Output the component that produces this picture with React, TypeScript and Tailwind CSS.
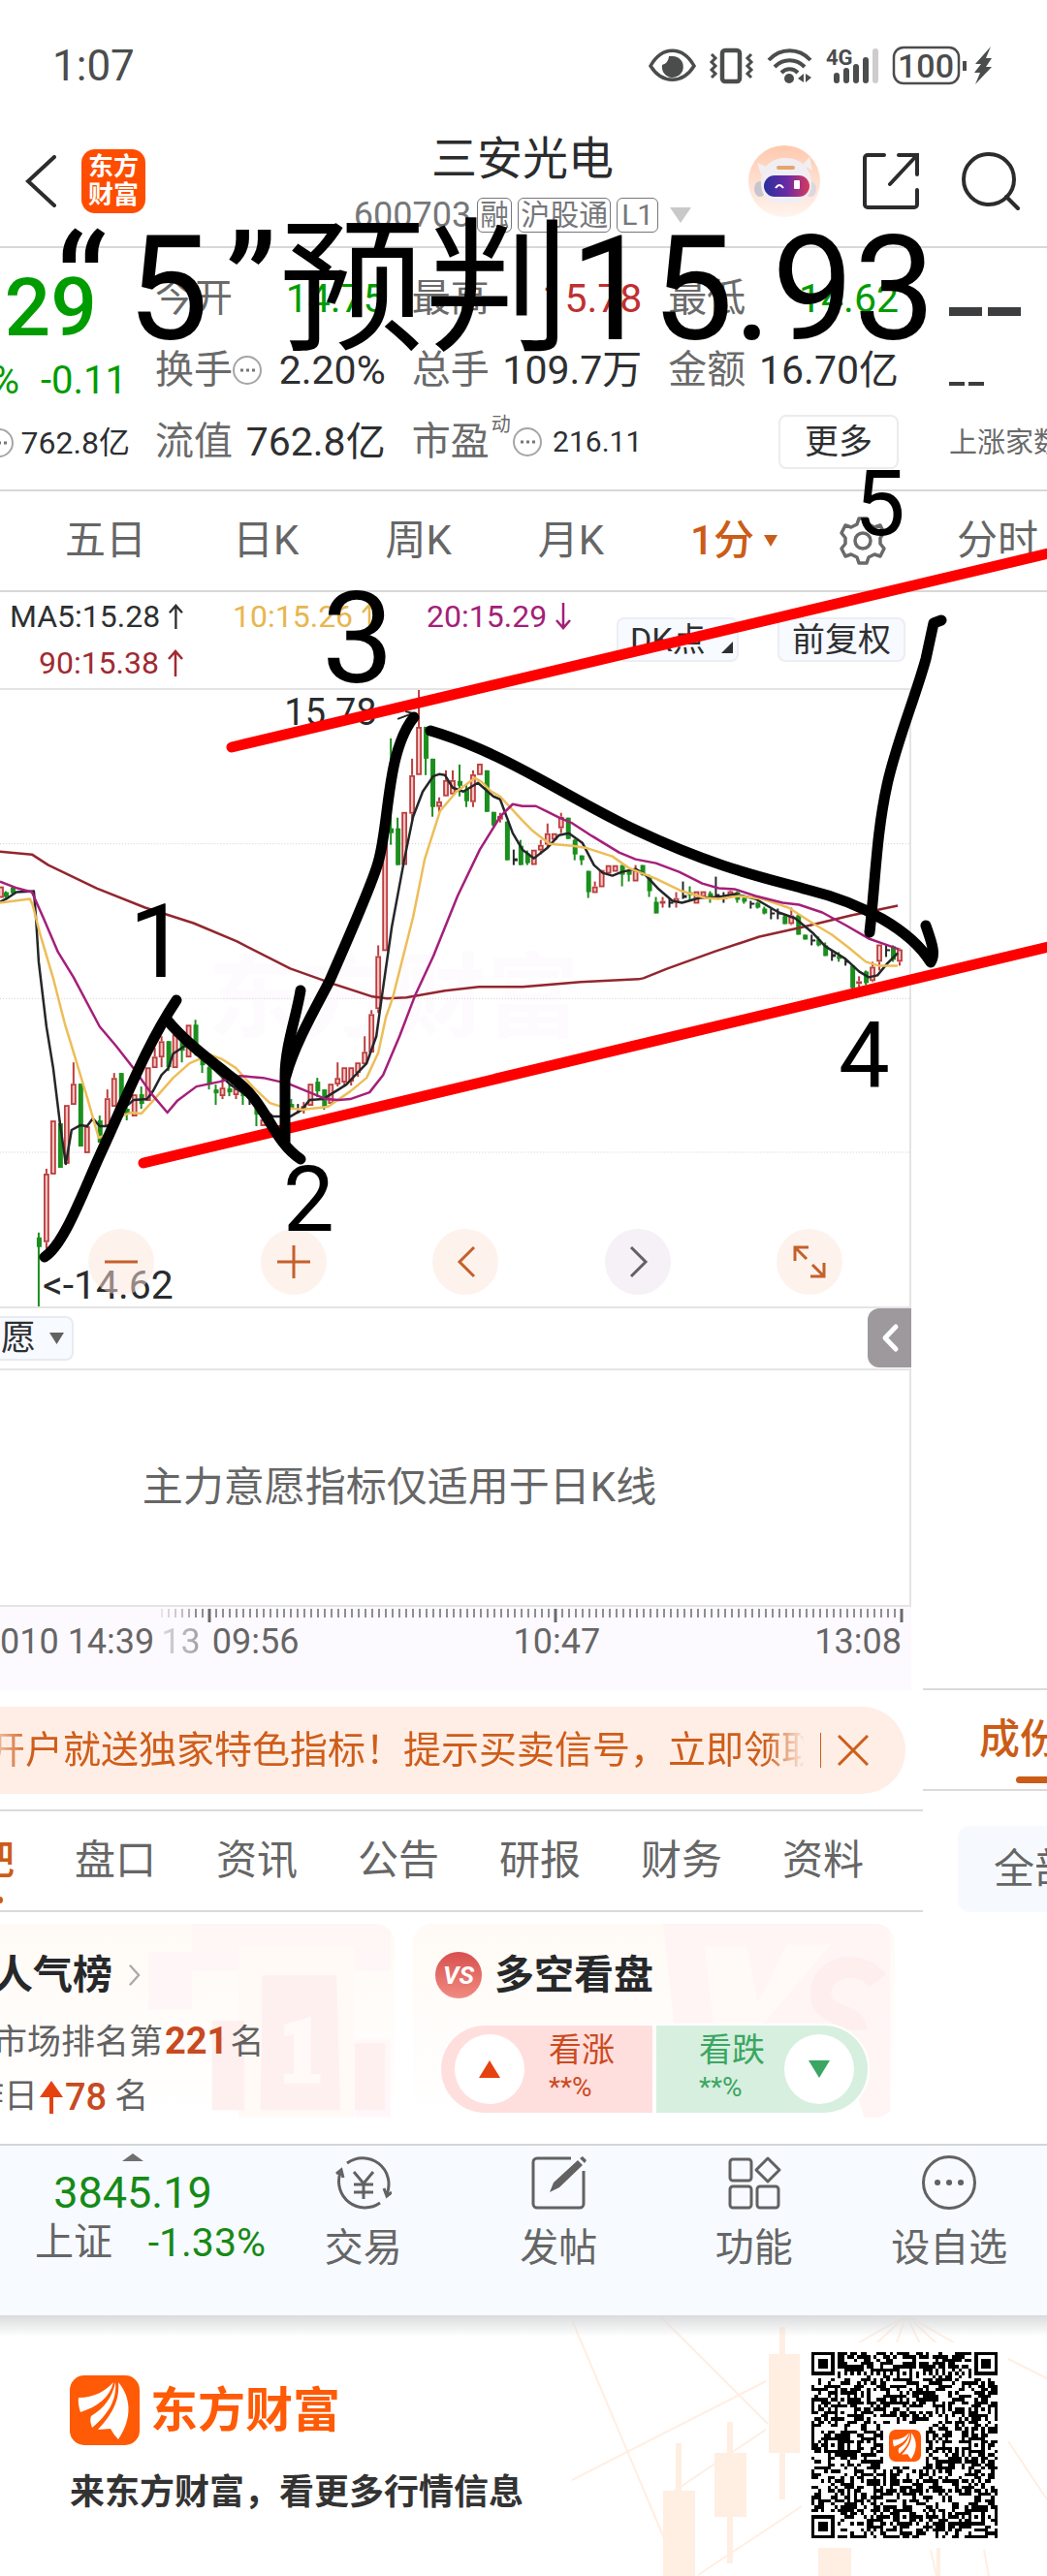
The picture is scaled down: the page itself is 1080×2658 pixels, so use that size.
import React from "react";

type Candle = [x: number, high: number, low: number, top: number, bottom: number, tone: "r" | "g" | "b"];

const CANDLES: Candle[] = [
  [1, 915, 927, 915, 927, "r"], [6, 920, 927, 921, 926, "g"], [13, 915, 923, 916, 922, "g"],
  [40, 1273, 1350, 1278, 1288, "g"], [48, 1207, 1290, 1212, 1283, "r"], [55, 1157, 1213, 1157, 1213, "r"],
  [62, 1157, 1206, 1160, 1206, "g"], [69, 1141, 1202, 1141, 1202, "r"], [76, 1097, 1141, 1119, 1141, "r"],
  [83, 1119, 1184, 1119, 1184, "g"], [90, 1163, 1191, 1163, 1191, "r"], [103, 1152, 1180, 1157, 1180, "g"],
  [111, 1125, 1163, 1134, 1163, "r"], [118, 1108, 1143, 1113, 1143, "r"], [125, 1108, 1145, 1108, 1145, "g"],
  [131, 1140, 1157, 1145, 1150, "g"], [139, 1130, 1153, 1130, 1153, "r"], [146, 1122, 1145, 1130, 1140, "g"],
  [153, 1102, 1137, 1102, 1137, "r"], [160, 1082, 1103, 1091, 1103, "r"], [167, 1070, 1102, 1075, 1092, "r"],
  [174, 1075, 1106, 1075, 1102, "g"], [181, 1068, 1103, 1068, 1103, "r"], [188, 1068, 1097, 1070, 1085, "g"],
  [195, 1058, 1092, 1058, 1092, "r"], [202, 1053, 1090, 1058, 1087, "g"], [209, 1087, 1108, 1090, 1100, "g"],
  [216, 1100, 1125, 1102, 1120, "g"], [223, 1120, 1141, 1125, 1129, "g"], [230, 1113, 1135, 1123, 1132, "r"],
  [237, 1120, 1132, 1124, 1128, "g"], [244, 1118, 1135, 1124, 1131, "r"], [251, 1123, 1141, 1127, 1132, "g"],
  [258, 1135, 1141, 1137, 1139, "b"], [265, 1139, 1163, 1143, 1151, "g"], [272, 1156, 1163, 1156, 1163, "r"],
  [301, 1135, 1146, 1140, 1144, "g"], [308, 1140, 1150, 1145, 1147, "b"], [314, 1138, 1150, 1142, 1145, "r"],
  [321, 1119, 1142, 1119, 1142, "r"], [328, 1113, 1133, 1117, 1127, "g"], [335, 1125, 1146, 1125, 1143, "g"],
  [342, 1119, 1140, 1119, 1140, "r"], [349, 1097, 1122, 1113, 1120, "r"], [356, 1102, 1122, 1102, 1118, "r"],
  [363, 1102, 1121, 1102, 1117, "r"], [370, 1097, 1112, 1097, 1108, "r"], [377, 1070, 1099, 1086, 1099, "r"],
  [384, 1043, 1087, 1047, 1087, "r"], [391, 976, 1046, 987, 1042, "r"], [398, 850, 982, 850, 982, "r"],
  [404, 762, 872, 855, 860, "g"], [411, 844, 893, 855, 893, "g"], [418, 838, 893, 838, 893, "r"],
  [426, 783, 848, 800, 840, "r"], [433, 712, 800, 750, 800, "r"], [440, 750, 800, 750, 783, "g"],
  [447, 783, 843, 783, 833, "g"], [454, 823, 838, 827, 833, "r"], [461, 795, 822, 805, 822, "r"],
  [468, 795, 820, 805, 820, "r"], [475, 789, 822, 806, 811, "g"], [482, 810, 833, 815, 827, "g"],
  [489, 795, 833, 799, 828, "r"], [496, 788, 800, 788, 800, "r"], [503, 795, 838, 795, 838, "g"],
  [510, 838, 853, 838, 852, "g"], [517, 839, 849, 842, 846, "r"], [524, 848, 888, 848, 888, "g"],
  [531, 877, 893, 886, 889, "b"], [538, 867, 893, 873, 893, "g"], [545, 878, 893, 881, 891, "g"],
  [552, 877, 893, 877, 893, "r"], [559, 867, 882, 872, 878, "r"], [566, 850, 875, 860, 872, "r"],
  [573, 860, 867, 860, 867, "r"], [580, 839, 860, 843, 855, "r"], [587, 844, 866, 844, 866, "g"],
  [594, 866, 888, 867, 882, "g"], [601, 883, 893, 883, 888, "g"], [608, 899, 927, 899, 921, "g"],
  [615, 910, 922, 915, 922, "r"], [622, 898, 916, 898, 916, "r"], [629, 893, 902, 893, 902, "r"],
  [636, 893, 900, 893, 900, "r"], [643, 893, 915, 893, 903, "g"], [650, 898, 910, 899, 903, "g"],
  [657, 893, 910, 898, 910, "r"], [664, 893, 904, 893, 903, "g"], [671, 903, 926, 905, 920, "g"],
  [678, 926, 943, 931, 943, "g"], [685, 926, 937, 930, 932, "r"], [692, 928, 937, 931, 933, "b"],
  [699, 921, 937, 927, 932, "r"], [706, 910, 928, 924, 927, "b"], [713, 915, 930, 921, 924, "g"],
  [720, 920, 933, 920, 933, "r"], [727, 920, 926, 920, 926, "r"], [734, 920, 932, 922, 928, "g"],
  [740, 905, 926, 923, 926, "b"], [748, 921, 932, 925, 928, "b"], [755, 919, 926, 920, 925, "r"],
  [762, 920, 932, 921, 929, "g"], [769, 924, 933, 927, 931, "g"], [776, 930, 938, 932, 934, "b"],
  [783, 931, 938, 932, 937, "g"], [790, 936, 944, 938, 943, "g"], [797, 938, 949, 942, 944, "b"],
  [804, 938, 949, 942, 944, "b"], [811, 944, 954, 946, 954, "g"], [818, 937, 955, 945, 954, "r"],
  [825, 944, 965, 945, 965, "g"], [832, 965, 970, 965, 970, "g"], [839, 965, 976, 970, 972, "b"],
  [846, 967, 977, 970, 976, "g"], [853, 973, 987, 976, 987, "g"], [860, 981, 992, 985, 988, "b"],
  [867, 983, 993, 987, 990, "g"], [874, 990, 997, 992, 994, "b"], [881, 997, 1021, 997, 1020, "g"],
  [888, 1008, 1019, 1013, 1016, "r"], [895, 1002, 1017, 1003, 1015, "g"], [902, 993, 1014, 998, 1013, "r"],
  [909, 975, 1002, 975, 993, "r"], [916, 976, 988, 980, 982, "b"], [923, 976, 993, 977, 991, "g"],
  [930, 979, 997, 980, 993, "r"],
];

const MA_LINES = [
  {
    color: "#93262e",
    points:
      "0,879 33,882 50,893 100,917 150,937 200,953 245,972 300,1000 345,1016 385,1029 400,1031 420,1030 460,1023 495,1019 540,1019 600,1014 660,1011 665,1010 690,1000 740,982 785,967 830,957 880,945 928,935",
  },
  {
    color: "#242628",
    points:
      "0,931 8,927 17,921 35,920 37,945 40,993 48,1060 55,1103 62,1160 68,1202 74,1167 83,1162 90,1163 96,1155 103,1163 114,1163 131,1142 138,1136 152,1135 158,1127 167,1110 174,1103 179,1088 191,1080 203,1083 220,1103 238,1120 258,1133 282,1153 300,1153 312,1146 320,1136 334,1135 358,1120 379,1098 389,1070 396,1020 405,957 418,887 427,843 437,817 448,801 454,799 460,800 468,813 479,817 494,808 510,822 517,825 530,860 540,877 552,886 566,875 578,862 588,860 602,870 614,893 623,901 633,904 643,900 657,897 667,903 681,918 695,930 705,932 723,927 743,926 760,923 781,928 805,942 822,948 840,963 853,977 874,990 888,1003 898,1009 907,1007 917,995 928,984",
  },
  {
    color: "#edbd57",
    points:
      "0,932 31,928 34,935 41,963 55,1010 67,1057 74,1080 90,1133 102,1175 110,1172 127,1152 135,1149 146,1150 157,1138 179,1113 196,1098 217,1089 230,1094 244,1103 262,1123 279,1139 295,1144 312,1146 339,1143 362,1127 379,1113 391,1087 399,1050 406,1030 427,947 439,887 455,837 472,817 491,803 498,807 508,817 517,822 540,847 550,857 568,871 592,873 605,875 633,884 650,896 678,907 705,920 729,927 743,928 764,925 788,928 815,937 840,953 860,965 877,978 895,993 908,997 928,997",
  },
  {
    color: "#a41f79",
    points:
      "0,910 18,917 33,921 45,948 60,983 76,1009 103,1060 120,1080 138,1103 157,1130 173,1149 183,1137 203,1122 227,1117 248,1111 272,1113 298,1119 320,1128 337,1135 350,1136 362,1135 382,1128 396,1110 413,1070 429,1028 448,987 473,925 496,877 517,843 530,830 540,832 554,832 566,838 578,844 592,850 612,863 640,880 657,887 678,891 702,900 726,912 743,917 760,918 781,925 809,932 826,934 850,942 874,955 898,969 912,974 929,980",
  },
];

const TONES = { r: "#bb3e3e", g: "#1b8f1e", b: "#242628" };

function PriceChart() {
  return (
    <svg viewBox="0 712 940 637" className="block w-full" role="img" aria-label="1分K线">
      <text x="215" y="1064" fontSize="96" fontWeight="700" fill="#fefbfe">
        东方财富
      </text>
      {[871, 1031, 1190].map((y) => (
        <line key={y} x1="0" x2="940" y1={y} y2={y} stroke="#cfcfcf" strokeDasharray="1 2" />
      ))}
      {CANDLES.map(([x, high, low, top, bottom, tone]) => (
        <g key={x} stroke={TONES[tone]}>
          {tone === "r" ? (
            <>
              {high < top && <line x1={x} x2={x} y1={high} y2={top} strokeWidth="2" />}
              {low > bottom && <line x1={x} x2={x} y1={bottom} y2={low} strokeWidth="2" />}
              <rect
                x={x - 2}
                y={top + 1}
                width="4"
                height={Math.max(bottom - top - 2, 1)}
                fill="#f6c4c2"
                strokeWidth="1.8"
              />
            </>
          ) : (
            <>
              <line x1={x} x2={x} y1={high} y2={low} strokeWidth="2" />
              <rect
                x={tone === "b" ? x : x - 2}
                y={top}
                width={tone === "b" ? 4 : 5}
                height={bottom - top}
                fill={TONES[tone]}
                stroke="none"
              />
            </>
          )}
        </g>
      ))}
      {MA_LINES.map((line) => (
        <polyline
          key={line.color}
          points={line.points}
          fill="none"
          stroke={line.color}
          strokeWidth="2.5"
          strokeLinejoin="round"
        />
      ))}
      <text x="294" y="748" fontSize="38" fill="#2a2b2d">
        15.78
      </text>
      <path d="M411 742l16-6-8-2" fill="none" stroke="#2a2b2d" strokeWidth="2" />
      <text x="44" y="1341" fontSize="41" fill="#2a2b2d">
        &lt;-14.62
      </text>
    </svg>
  );
}

function Annotations() {
  return (
    <svg
      viewBox="0 0 1080 2658"
      className="pointer-events-none absolute inset-0 size-full"
      fill="none"
      strokeLinecap="round"
      strokeLinejoin="round"
    >
      <g stroke="#fe0000" strokeWidth="11">
        <path d="M239 771L1090 569" />
        <path d="M148 1200L1090 975" />
      </g>
      <g stroke="#000" strokeWidth="11">
        <path d="M46 1297C66 1284 84 1234 103 1192C130 1134 150 1080 182 1032" />
        <path d="M172 1052C190 1074 214 1092 241 1113C276 1138 280 1176 310 1196" />
        <path d="M310 1022C306 1048 294 1080 294 1110V1178" />
        <path d="M295 1110C304 1076 330 1032 340 1012C362 962 384 912 390 890C402 850 398 776 427 740" />
        <path d="M444 754C520 776 590 826 657 857C740 896 790 906 833 918C890 932 940 960 960 993C966 984 960 970 955 955" />
        <path d="M897 962C903 910 904 860 915 810C924 768 944 720 955 680L963 643L971 640" />
      </g>
      <g fill="#000">
        <text x="57" y="350" fontSize="150">“</text>
        <text x="131" y="350" fontSize="150">5</text>
        <text x="232" y="350" fontSize="150">”</text>
        <text x="288" y="350" fontSize="150">预判15.93</text>
        <text x="133" y="1008" fontSize="106">1</text>
        <text x="292" y="1270" fontSize="94">2</text>
        <text x="332" y="704" fontSize="132">3</text>
        <text x="865" y="1122" fontSize="94">4</text>
        <text x="881" y="552" fontSize="94">5</text>
      </g>
    </svg>
  );
}

function StatusBar() {
  return (
    <div className="flex h-[120px] items-center justify-between pt-[15px] pr-[54px] pl-[54px] text-[#4b4c4c]">
      <span className="text-[44px] leading-none">1:07</span>
      <svg viewBox="668 44 358 46" className="h-[46px] w-[358px]" fill="none" stroke="#4b4c4c">
        <path d="M671 67C683 46 704 46 716 67C704 86 683 86 671 67Z" strokeWidth="3.5" />
        <path d="M690 57a10 10 0 0 1-7 9a11 11 0 1 0 11-9z" fill="#4b4c4c" stroke="none" />
        <rect x="745" y="51" width="18" height="32" rx="3" strokeWidth="4.5" />
        <path d="M734 55l4 4-4 4 4 4-4 4 4 4-4 4M775 55l-4 4 4 4-4 4 4 4-4 4 4 4" strokeWidth="3" />
        <path d="M793 61C805 48 824 48 836 61M799 68C808 59 821 59 830 68M806 74C811 69 818 69 823 74" strokeWidth="4" />
        <circle cx="814" cy="80" r="5" fill="#4b4c4c" stroke="none" />
        <path d="M823 80l6-5v9zM831 75v9l6-5z" fill="#4b4c4c" stroke="none" />
        <path d="M863 77v5M873 72v10M883 68v14M893 61v21" strokeWidth="6" strokeLinecap="round" />
        <path d="M903 52v30" stroke="#cfcccd" strokeWidth="6" strokeLinecap="round" />
        <text x="852" y="66" fontSize="22" fontWeight="700" fill="#4b4c4c" stroke="none">4G</text>
        <rect x="922" y="48" width="67" height="37" rx="10" strokeWidth="2.5" />
        <text x="926" y="79" fontSize="34" fontWeight="500" fill="#4b4c4c" stroke="none">100</text>
        <path d="M995 62v10" strokeWidth="4" />
        <path d="M1022 47l-16 18h6l-7 9h6l-5 12 17-18h-6l6-9h-6z" fill="#4b4c4c" stroke="none" />
      </svg>
    </div>
  );
}

function BrandMark({ className = "" }: { className?: string }) {
  return (
    <svg viewBox="0 0 72 72" className={className} aria-hidden="true">
      <rect width="72" height="72" rx="15" fill="#ff5a05" />
      <g fill="#fff">
        <path d="M9 23C25 23 37 16 45 7C41 23 29 32 11 38Q8 29 9 23Z" />
        <path d="M47 7C49 26 38 42 23 54Q20 46 22 42C35 34 44 23 47 7Z" />
        <path d="M50 7C66 26 62 49 50 66Q45 61 42 55L29 56C42 42 52 27 50 7Z" />
      </g>
    </svg>
  );
}

function RobotAvatar() {
  return (
    <svg viewBox="0 0 74 74" className="size-[74px]">
      <defs>
        <linearGradient id="halo" x2="0" y2="1">
          <stop stopColor="#ffc9ae" />
          <stop offset="1" stopColor="#fff4ef" />
        </linearGradient>
        <linearGradient id="visor">
          <stop stopColor="#2a2f9e" />
          <stop offset=".5" stopColor="#6a2aa5" />
          <stop offset="1" stopColor="#d93a5c" />
        </linearGradient>
      </defs>
      <circle cx="37" cy="37" r="37" fill="url(#halo)" />
      <ellipse cx="12" cy="45" rx="6" ry="8" fill="#c9c5cc" />
      <ellipse cx="64" cy="45" rx="6" ry="8" fill="#dcd7dd" />
      <path d="M9 18l10 4-6 8zM63 12l3 14-10-6z" fill="#f3eff1" />
      <path d="M13 38C13 22 24 13 38 13C54 13 65 24 65 40C65 54 54 60 39 60C22 60 13 54 13 38Z" fill="#f1eef3" />
      <rect x="29" y="21" width="19" height="4" rx="2" fill="#e5a56d" />
      <rect x="16" y="31" width="47" height="22" rx="11" fill="url(#visor)" />
      <path d="M28 44q4-6 8 0" fill="none" stroke="#fff" strokeWidth="2" />
      <rect x="47" y="36" width="6" height="9" rx="1" fill="#fff" />
    </svg>
  );
}

function Header() {
  return (
    <header className="grid h-[136px] grid-cols-[1fr_auto_1fr] items-center border-b-2 border-[#d8d8d8] pr-[28px] pl-[26px]">
      <div className="flex items-center gap-[26px]">
        <button aria-label="返回">
          <svg viewBox="0 0 32 54" className="h-[54px] w-[32px]" fill="none" stroke="#2b2c2e" strokeWidth="4">
            <path d="M30 2L3 27L30 52" strokeLinecap="round" />
          </svg>
        </button>
        <div className="grid size-[66px] place-content-center rounded-[14px] bg-[#ff4d00] text-[26px] leading-[29px] font-bold text-white">
          <span>东方</span>
          <span>财富</span>
        </div>
      </div>
      <div className="flex flex-col items-center gap-[10px]">
        <h1 className="text-[47px] leading-[60px] text-[#2b2c2e]">三安光电</h1>
        <div className="flex items-center gap-[6px] text-[30px] leading-[34px] text-[#76777a]">
          <span className="text-[36px]">600703</span>
          <span className="rounded-md border border-[#76777a] px-[2px]">融</span>
          <span className="rounded-md border border-[#76777a] px-[2px]">沪股通</span>
          <span className="rounded-md border border-[#76777a] px-[4px]">L1</span>
          <svg viewBox="0 0 22 16" className="ml-[6px] h-[16px] w-[22px]">
            <path d="M0 0h22L11 16z" fill="#c9c9c9" />
          </svg>
        </div>
      </div>
      <div className="flex items-center justify-end gap-[44px]">
        <button aria-label="智能助手">
          <RobotAvatar />
        </button>
        <button aria-label="分享">
          <svg viewBox="0 0 58 58" className="size-[58px]" fill="none" stroke="#2b2c2e" strokeWidth="4" strokeLinecap="round">
            <path d="M22 2H5a3 3 0 0 0-3 3v48a3 3 0 0 0 3 3h48a3 3 0 0 0 3-3V38M37 2h19v20M56 2L28 32" />
          </svg>
        </button>
        <button aria-label="搜索">
          <svg viewBox="0 0 60 60" className="size-[60px]" fill="none" stroke="#2b2c2e" strokeWidth="4">
            <circle cx="28" cy="28" r="26" />
            <path d="M46 46l12 12" strokeLinecap="round" />
          </svg>
        </button>
      </div>
    </header>
  );
}

function InfoDot() {
  return (
    <svg viewBox="0 0 30 30" className="size-[30px] shrink-0" fill="none" stroke="#a5a5a5" strokeWidth="2">
      <circle cx="15" cy="15" r="14" />
      <path d="M8 15h3M14 15h3M20 15h3" stroke="#777" strokeWidth="3" />
    </svg>
  );
}

interface QuoteCellProps {
  label: string;
  value: string;
  valueClass?: string;
  info?: boolean;
}

function QuoteCell({ label, value, valueClass = "text-[#2e2f31]", info = false }: QuoteCellProps) {
  return (
    <div className="flex h-[74px] items-center justify-between whitespace-nowrap">
      <span className="flex items-center text-[#6a6a6a]">
        {label}
        {info && <InfoDot />}
      </span>
      <span className={`text-[41px] ${valueClass}`}>{value}</span>
    </div>
  );
}

function QuotePanel() {
  return (
    <section className="flex border-b-2 border-[#d8d8d8] pt-[15px] pb-[12px] text-[40px] leading-none">
      <div className="flex flex-1 gap-[26px] pr-[25px]">
        <div className="flex w-[134px] flex-col items-end whitespace-nowrap text-[#009c00]">
          <div className="flex h-[94px] items-center pr-[34px] text-[84px] font-medium">.29</div>
          <div className="flex h-[56px] items-center gap-[22px] pr-[3px] text-[40px]">
            <span>%</span>
            <span>-0.11</span>
          </div>
          <div className="flex h-[72px] items-center gap-[8px] text-[32px] text-[#2e2f31]">
            <InfoDot />
            762.8亿
          </div>
        </div>
        <div className="grid flex-1 grid-cols-3 gap-x-[27px]">
          <QuoteCell label="今开" value="14.75" valueClass="text-[#009c00]" />
          <QuoteCell label="最高" value="15.78" valueClass="text-[#bf3030]" />
          <QuoteCell label="最低" value="14.62" valueClass="text-[#009c00]" />
          <QuoteCell label="换手" value="2.20%" info />
          <QuoteCell label="总手" value="109.7万" />
          <QuoteCell label="金额" value="16.70亿" />
          <QuoteCell label="流值" value="762.8亿" />
          <div className="flex h-[74px] items-center justify-between whitespace-nowrap">
            <span className="flex items-center gap-[2px] text-[#6a6a6a]">
              市盈
              <sup className="top-0 mb-[36px] text-[20px] leading-none">动</sup>
              <InfoDot />
            </span>
            <span className="text-[30px] text-[#2e2f31]">216.11</span>
          </div>
          <div className="flex h-[74px] items-center justify-end">
            <button className="h-[56px] w-[124px] rounded-lg border-2 border-[#ececec] text-[35px] text-[#2e2f31]">
              更多
            </button>
          </div>
        </div>
      </div>
      <div className="flex w-32 flex-col overflow-hidden pl-[27px] whitespace-nowrap text-[#3c3d3f]">
        <div className="flex h-[100px] items-center gap-[6px]">
          <span className="h-[9px] w-[34px] bg-[#3c3d3f]" />
          <span className="h-[9px] w-[34px] bg-[#3c3d3f]" />
        </div>
        <div className="flex h-[50px] items-center gap-[4px]">
          <span className="h-[4px] w-[16px] bg-[#3c3d3f]" />
          <span className="h-[4px] w-[16px] bg-[#3c3d3f]" />
        </div>
        <div className="flex h-[72px] items-center text-[29px] text-[#6a6a6a]">上涨家数</div>
      </div>
    </section>
  );
}

function PeriodTabs() {
  return (
    <nav className="flex h-[104px] items-center overflow-hidden border-b-2 border-[#d8d8d8] text-[42px] leading-none whitespace-nowrap text-[#666]">
      <div className="flex flex-1 items-center gap-[89px] pr-[37px] pl-[67px]">
        <button>五日</button>
        <button>日K</button>
        <button>周K</button>
        <button>月K</button>
        <button className="flex items-center gap-[10px] font-medium text-[#cb5c17]">
          1分
          <svg viewBox="0 0 14 12" className="h-[12px] w-[14px]">
            <path d="M0 0h14L7 12z" fill="#cb5c17" />
          </svg>
        </button>
        <button aria-label="设置" className="-ml-[89px] flex-1">
          <svg viewBox="0 0 50 50" className="ml-auto size-[50px]" fill="none" stroke="#6a6a6a" strokeWidth="3.5" strokeLinejoin="round">
            <path d="M21 2h8l2 6 6 3 6-2 4 8-4 5v6l4 5-4 8-6-2-6 3-2 6h-8l-2-6-6-3-6 2-4-8 4-5v-6l-4-5 4-8 6 2 6-3z" />
            <circle cx="25" cy="25" r="8" />
          </svg>
        </button>
      </div>
      <div className="w-32 pl-[35px]">
        <button>分时</button>
      </div>
    </nav>
  );
}

function Trend({ down = false }: { down?: boolean }) {
  return (
    <svg viewBox="0 0 18 28" className="h-[28px] w-[18px]" fill="none" stroke="currentColor" strokeWidth="2.5">
      <path d={down ? "M9 0v26M2 18l7 8 7-8" : "M9 28V2M2 10l7-8 7 8"} />
    </svg>
  );
}

function MaLegend() {
  return (
    <div className="flex h-[99px] items-start justify-between pt-[1px] pr-[6px] pl-[10px] leading-[48px] whitespace-nowrap">
      <div className="grid grid-cols-[180px_auto_auto] gap-x-[50px] text-[32px]">
        <span className="flex items-center justify-end gap-[8px] text-[#2e2f31]">
          MA5:15.28 <Trend />
        </span>
        <span className="flex items-center gap-[8px] text-[#e8b64e]">
          10:15.26 <Trend />
        </span>
        <span className="flex items-center gap-[8px] text-[#a41f79]">
          20:15.29 <Trend down />
        </span>
        <span className="flex items-center justify-end gap-[8px] text-[#a02a31]">
          90:15.38 <Trend />
        </span>
      </div>
      <div className="mt-[25px] flex gap-[40px] text-[34px] leading-none text-[#2e2f31]">
        <button className="flex h-[46px] w-[126px] items-center justify-between rounded-lg border-2 border-[#eceef3] bg-[#f7faff] pr-[4px] pl-[12px]">
          DK点
          <svg viewBox="0 0 12 12" className="mt-[16px] size-[12px]">
            <path d="M12 0v12H0z" fill="#2e2f31" />
          </svg>
        </button>
        <button className="h-[46px] w-[132px] rounded-lg border-2 border-[#eceef3] bg-[#f7faff]">前复权</button>
      </div>
    </div>
  );
}

const ZOOM_CONTROLS = [
  { label: "缩小", path: "M-17 0H17" },
  { label: "放大", path: "M-17 0H17M0-17V17" },
  { label: "向左", path: "M9-15L-6 0L9 15" },
  { label: "向右", path: "M-7-15L8 0L-7 15", muted: true },
  { label: "全屏", path: "M-15-1V-15H-1M-15-15L-3-3M15 1V15H1M15 15L3 3" },
];

function ChartControls() {
  return (
    <div className="absolute inset-x-0 bottom-[12px] flex justify-between pr-[69px] pl-[91px]">
      {ZOOM_CONTROLS.map(({ label, path, muted }) => (
        <button
          key={label}
          aria-label={label}
          className={`size-[68px] rounded-full ${muted ? "bg-[#eee8f0]/60" : "bg-[#fde5dc]/50"}`}
        >
          <svg viewBox="-34 -34 68 68" fill="none" stroke={muted ? "#626262" : "#c4602a"} strokeWidth="3">
            <path d={path} />
          </svg>
        </button>
      ))}
    </div>
  );
}

function IndicatorPane() {
  return (
    <>
      <div className="flex h-[64px] items-center justify-between border-b-2 border-[#e4e4e4]">
        <button className="flex h-[46px] items-center gap-[14px] rounded-r-lg border-2 border-l-0 border-[#e8ebf1] bg-[#f7faff] pr-[8px] pl-[1px] text-[36px] leading-none text-[#2e2f31]">
          愿
          <svg viewBox="0 0 15 12" className="h-[12px] w-[15px]">
            <path d="M0 0h15L7.500 12z" fill="#626262" />
          </svg>
        </button>
        <button aria-label="展开" className="h-[61px] w-[45px] rounded-l-xl bg-[#9d999d]">
          <svg viewBox="0 0 45 61" fill="none" stroke="#fff" strokeWidth="5" strokeLinecap="round" strokeLinejoin="round">
            <path d="M29 19L18 30.500L29 42" />
          </svg>
        </button>
      </div>
      <div className="grid h-[244px] place-items-center border-r-2 border-b-2 border-[#e4e4e4] pr-[114px] text-[42px] leading-none text-[#666]">
        <p>主力意愿指标仅适用于日K线</p>
      </div>
    </>
  );
}

const TICKS = Array.from({ length: 110 }, (_, i) => 930 - i * 7).filter((x) => x > 160);

function TimeAxis() {
  return (
    <div className="h-[86px] bg-[#fdfaff]">
      <svg viewBox="0 0 940 16" className="block w-full" stroke="#6a6a6a">
        {TICKS.map((x) => {
          const major = (930 - x) % 357 === 0;
          return (
            <line
              key={x}
              x1={x}
              x2={x}
              y1="2"
              y2={major ? 16 : 11}
              strokeWidth={major ? 3 : 1.5}
              opacity={x < 200 ? (x - 155) / 60 : 1}
            />
          );
        })}
      </svg>
      <div className="flex justify-between pr-[10px] text-[36px] leading-[40px] whitespace-nowrap text-[#666]">
        <span className="flex">
          <span>010 14:39</span>
          <span className="bg-gradient-to-r from-[#e6e4e8] to-[#8f8f92] bg-clip-text pr-[12px] pl-[7px] text-transparent">
            13
          </span>
          <span>09:56</span>
        </span>
        <span>10:47</span>
        <span>13:08</span>
      </div>
    </div>
  );
}

function PromoBanner() {
  return (
    <div className="mt-[17px] mr-[18px] flex h-[90px] items-center overflow-hidden rounded-r-full bg-[#feeee6] pr-[38px] text-[39px] leading-none whitespace-nowrap text-[#cf5d19]">
      <div className="flex-1 overflow-hidden [mask-image:linear-gradient(to_right,#0006,#000_30px,#000_790px,#0001_828px)]">
        <p className="-ml-[13px] w-0 leading-[56px]">开户就送独家特色指标！提示买卖信号，立即领取</p>
      </div>
      <span className="mx-[17px] h-[36px] w-px bg-[#cf5d19]" />
      <button aria-label="关闭">
        <svg viewBox="0 0 32 32" className="size-[32px]" stroke="#cf5d19" strokeWidth="3">
          <path d="M1 1l30 30M31 1L1 31" />
        </svg>
      </button>
    </div>
  );
}

function StockTabs() {
  return (
    <nav className="mt-[16px] flex h-[106px] items-center gap-[62px] overflow-hidden border-y-2 border-[#dadada] text-[42px] leading-none whitespace-nowrap text-[#666]">
      <button className="relative -ml-[69px] w-[84px] text-right font-medium text-[#cb5c17]">
        吧
        <span className="absolute -bottom-[23px] left-[12px] h-[7px] w-[60px] rounded-full bg-[#cb5c17]" />
      </button>
      {["盘口", "资讯", "公告", "研报", "财务", "资料"].map((tab) => (
        <button key={tab}>{tab}</button>
      ))}
    </nav>
  );
}

function PopularityCard() {
  return (
    <div className="relative h-[200px] w-[407px] overflow-hidden rounded-tr-[20px] bg-gradient-to-b from-[#fffaf5] to-white">
      <svg viewBox="0 0 407 204" className="absolute inset-0 size-full">
        <path d="M198 0H407V204H370V122H407V50H198V90H152V30H198z" fill="#fff3f6" opacity=".7" />
        <path d="M247 24h122v180H247z" fill="#fffaf5" />
        <path d="M272 54h78l4 142h-84zM219 102h34v94h-34zM369 126h32v70h-32z" fill="#fff0f0" />
        <path d="M295 106l28-8v60h10v10h-38v-10h10v-42l-10 3z" fill="#fffaf8" />
      </svg>
      <div className="relative -ml-[7px] pt-[23px] text-[35px] whitespace-nowrap text-[#626262]">
        <h2 className="flex items-center gap-[16px] text-[41px] leading-[60px] font-bold text-[#27282a]">
          人气榜
          <svg viewBox="0 0 14 26" className="h-[24px] w-[13px]" fill="none" stroke="#aaa" strokeWidth="2.500">
            <path d="M2 2l10 11L2 24" />
          </svg>
        </h2>
        <p className="mt-[8px] leading-[60px]">
          市场排名第<b className="mx-[2px] text-[38px] text-[#c84a21]">221</b>名
        </p>
        <p className="-ml-[24px] flex items-center leading-[52px]">
          昨日
          <svg viewBox="0 0 24 34" className="mx-[2px] h-[34px] w-[24px]">
            <path d="M12 0l12 17H14v17h-4V17H0z" fill="#e64210" />
          </svg>
          <b className="mr-[8px] text-[38px] font-medium text-[#c84a21]">78</b>名
        </p>
      </div>
    </div>
  );
}

function SentimentCard() {
  return (
    <div className="relative h-[200px] flex-1 overflow-hidden rounded-[20px] bg-gradient-to-b from-[#fffaf5] to-white">
      <svg viewBox="0 0 497 204" className="absolute inset-0 size-full">
        <path d="M258 0H497V204H470L440 110H270z" fill="#fff5f5" />
        <path d="M302 24h44l12 60 30-62h46l-76 90h-46z" fill="#fffaf7" />
        <path d="M484 60C466 36 424 44 424 74C424 100 462 92 462 112" stroke="#ffeeee" strokeWidth="22" fill="none" />
      </svg>
      <div className="relative pt-[23px] pr-[26px] pl-[23px]">
        <h2 className="flex items-center gap-[13px] text-[41px] leading-[60px] font-bold text-[#27282a]">
          <span className="grid size-[48px] place-items-center rounded-full bg-gradient-to-b from-[#d74f4f] to-[#f08a80] text-[26px] leading-none text-white italic">
            VS
          </span>
          多空看盘
        </h2>
        <div className="mt-[20px] ml-[4px] flex h-[94px] gap-[4px] overflow-hidden rounded-full border-2 border-white text-[34px]">
          <button className="flex flex-1 items-center gap-[25px] bg-[#ffdfdd] pl-[14px] text-left text-[#cc4a1f]">
            <span className="grid size-[72px] place-items-center rounded-full bg-white">
              <svg viewBox="0 0 24 20" className="h-[20px] w-[24px]">
                <path d="M12 1L23 19H1z" fill="#e64210" />
              </svg>
            </span>
            <span className="leading-[36px]">
              看涨
              <br />
              <span className="text-[28px]">**%</span>
            </span>
          </button>
          <button className="flex flex-1 items-center justify-end gap-[20px] bg-[#d7efdf] pr-[14px] text-left text-[#3ba662]">
            <span className="leading-[36px]">
              看跌
              <br />
              <span className="text-[28px]">**%</span>
            </span>
            <span className="grid size-[72px] place-items-center rounded-full bg-white">
              <svg viewBox="0 0 24 20" className="h-[20px] w-[24px]">
                <path d="M12 19L23 1H1z" fill="#3ba662" />
              </svg>
            </span>
          </button>
        </div>
      </div>
    </div>
  );
}

function SidePage() {
  return (
    <aside className="flex w-32 flex-col overflow-hidden text-[42px] leading-none whitespace-nowrap text-[#666]">
      <div className="mt-[1131px] flex h-[106px] items-center border-y-2 border-[#dadada] pl-[58px]">
        <button className="relative font-medium text-[#cb5c17]">
          成份
          <span className="absolute -bottom-[24px] left-[38px] h-[7px] w-[60px] rounded-full bg-[#cb5c17]" />
        </button>
      </div>
      <button className="mt-[36px] ml-[36px] h-[89px] w-[160px] rounded-xl bg-[#f6faff] pl-[37px] text-left">全部</button>
    </aside>
  );
}

const NAV_ITEMS = [
  {
    label: "交易",
    icon: (
      <>
        <path d="M12 8A27 27 0 0 1 53 40M46 49A27 27 0 0 1 5 18" />
        <path d="M1 19l5-4 2 8M58 38l-5 4-3-8" />
        <path d="M19 17l10 12 10-12M29 29v16M19 30h20M19 38h20" />
      </>
    ),
  },
  {
    label: "发帖",
    icon: (
      <>
        <path d="M42 3H7a4 4 0 0 0-4 4v43a4 4 0 0 0 4 4h44a4 4 0 0 0 4-4V16" />
        <path d="M20 38l4-10L49 5l5 5-24 23zM51 3l3-2 4 4-2 3z" fill="#626262" stroke="none" />
      </>
    ),
  },
  {
    label: "功能",
    icon: (
      <>
        <rect x="4" y="4" width="22" height="22" rx="3" />
        <path d="M43 3l12 12-12 12-12-12z" strokeLinejoin="round" />
        <rect x="4" y="32" width="22" height="22" rx="3" />
        <rect x="32" y="32" width="22" height="22" rx="3" />
      </>
    ),
  },
  {
    label: "设自选",
    icon: (
      <>
        <circle cx="29" cy="28" r="26.500" />
        <path d="M17 28h.1M29 28h.1M41 28h.1" strokeWidth="6" strokeLinecap="round" />
      </>
    ),
  },
];

function BottomNav() {
  return (
    <nav className="flex h-[177px] border-t-2 border-[#d3d5d8] bg-[#f7faff] text-[40px] leading-none whitespace-nowrap text-[#666]">
      <a href="#index" className="flex w-[274px] flex-col items-center pt-[8px] text-[#168a16]">
        <svg viewBox="0 0 22 8" className="h-[8px] w-[22px]">
          <path d="M0 8h22L11 0z" fill="#707070" />
        </svg>
        <span className="mt-[10px] text-[45px] leading-[46px]">3845.19</span>
        <span className="flex w-full justify-between pl-[36px] leading-[56px]">
          <span className="text-[#666]">上证</span>
          <span className="text-[41px]">-1.33%</span>
        </span>
      </a>
      {NAV_ITEMS.map(({ label, icon }) => (
        <button key={label} className="flex flex-1 flex-col items-center gap-[16px] pt-[10px]">
          <svg viewBox="0 0 58 58" className="size-[58px]" fill="none" stroke="#626262" strokeWidth="3">
            {icon}
          </svg>
          <span className="leading-[44px]">{label}</span>
        </button>
      ))}
    </nav>
  );
}

const QR_SIZE = 57;

function inSquare(x: number, y: number, cx: number, cy: number, r: number) {
  return Math.max(Math.abs(x - cx), Math.abs(y - cy)) <= r;
}

function qrModule(x: number, y: number) {
  for (const [cx, cy] of [[3, 3], [53, 3], [3, 53]]) {
    const d = Math.max(Math.abs(x - cx), Math.abs(y - cy));
    if (d <= 4) return d !== 2 && d !== 4;
  }
  for (const [cx, cy] of [[28, 6], [6, 28], [50, 28], [28, 50], [50, 50]]) {
    if (inSquare(x, y, cx, cy, 2)) return !inSquare(x, y, cx, cy, 1) || (x === cx && y === cy);
  }
  if (inSquare(x, y, 28, 28, 6)) return false;
  if (x === 6 || y === 6) return (x + y) % 2 === 0;
  let h = Math.imul(x + 11, 374761393) ^ Math.imul(y + 7, 668265263);
  h = Math.imul(h ^ (h >>> 13), 1274126177);
  return ((h ^ (h >>> 16)) & 255) < 132;
}

function QrCode() {
  let d = "";
  for (let y = 0; y < QR_SIZE; y++) {
    for (let x = 0; x < QR_SIZE; x++) {
      if (qrModule(x, y)) d += `M${x} ${y}h1v1h-1z`;
    }
  }
  return (
    <div className="relative grid size-[212px] place-items-center bg-white">
      <svg viewBox="0 0 57 57" className="size-[192px]" shapeRendering="crispEdges" role="img" aria-label="二维码">
        <path d={d} />
      </svg>
      <BrandMark className="absolute size-[33px]" />
    </div>
  );
}

function Footer() {
  return (
    <footer className="relative flex h-[269px] items-start justify-between overflow-hidden bg-white pr-[41px] pl-[72px]">
      <svg viewBox="0 0 490 269" className="absolute right-0 bottom-0 h-full w-[490px]" fill="none" stroke="#ffeee2" strokeWidth="2">
        <path d="M90 0L202 112M0 5L95 230M0 170L200 68M100 185L200 118M130 268L240 195M345 0L272 42M345 0L300 42M345 0L330 42M345 0L365 42M345 0L390 42M345 0L418 42M450 45L490 65M450 130L490 190M370 242L376 269M425 242L430 269" />
        <g fill="#ffeee2" stroke="none">
          <path d="M203 40h32v102h-32zM214 12h6v178h-6zM147 142h33v66h-33zM160 110h6v146h-6zM94 181h33v88H94zM107 132h6v60h-6zM254 239h34v30h-34zM376 239h4v30h-4z" />
        </g>
      </svg>
      <div className="absolute inset-x-0 top-0 h-[22px] bg-gradient-to-b from-[#d9dbdc] to-transparent" />
      <div className="relative pt-[62px]">
        <div className="flex items-center gap-[11px]">
          <BrandMark className="size-[72px]" />
          <span className="text-[49px] leading-none font-bold text-[#ff5a05]">东方财富</span>
        </div>
        <p className="mt-[24px] text-[36px] leading-[50px] font-bold text-[#333]">来东方财富，看更多行情信息</p>
      </div>
      <div className="relative pt-[28px]">
        <QrCode />
      </div>
    </footer>
  );
}

export default function App() {
  return (
    <div className="relative overflow-hidden bg-white font-['Roboto','Noto_Sans_CJK_SC',sans-serif]">
      <StatusBar />
      <Header />
      <QuotePanel />
      <PeriodTabs />
      <div className="flex h-[1601px]">
        <main className="min-w-0 flex-1">
          <div className="mr-[12px]">
            <MaLegend />
            <div className="relative border-y-2 border-r-2 border-[#e4e4e4]">
              <PriceChart />
              <ChartControls />
            </div>
            <IndicatorPane />
            <TimeAxis />
          </div>
          <PromoBanner />
          <StockTabs />
          <div className="mt-[12px] mr-[29px] flex gap-[19px]">
            <PopularityCard />
            <SentimentCard />
          </div>
        </main>
        <SidePage />
      </div>
      <BottomNav />
      <Footer />
      <Annotations />
    </div>
  );
}
